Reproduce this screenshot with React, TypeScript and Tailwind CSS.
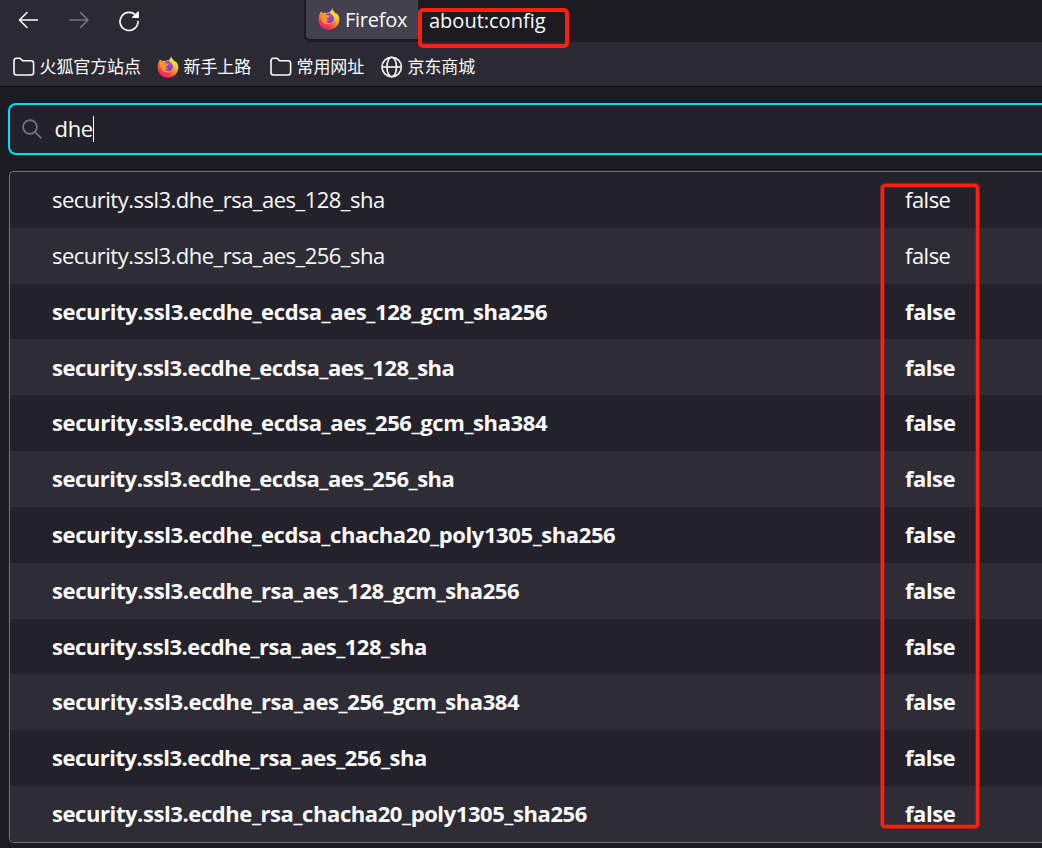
import React from "react";

const rows = [
  { name: "security.ssl3.dhe_rsa_aes_128_sha", style: "font-normal tracking-[-0.51px]" },
  { name: "security.ssl3.dhe_rsa_aes_256_sha", style: "font-normal tracking-[-0.51px]" },
  { name: "security.ssl3.ecdhe_ecdsa_aes_128_gcm_sha256", style: "font-bold tracking-[-0.39px]" },
  { name: "security.ssl3.ecdhe_ecdsa_aes_128_sha", style: "font-bold tracking-[-0.48px]" },
  { name: "security.ssl3.ecdhe_ecdsa_aes_256_gcm_sha384", style: "font-bold tracking-[-0.39px]" },
  { name: "security.ssl3.ecdhe_ecdsa_aes_256_sha", style: "font-bold tracking-[-0.48px]" },
  { name: "security.ssl3.ecdhe_ecdsa_chacha20_poly1305_sha256", style: "font-bold tracking-[-0.4px]" },
  { name: "security.ssl3.ecdhe_rsa_aes_128_gcm_sha256", style: "font-bold tracking-[-0.4px]" },
  { name: "security.ssl3.ecdhe_rsa_aes_128_sha", style: "font-bold tracking-[-0.49px]" },
  { name: "security.ssl3.ecdhe_rsa_aes_256_gcm_sha384", style: "font-bold tracking-[-0.4px]" },
  { name: "security.ssl3.ecdhe_rsa_aes_256_sha", style: "font-bold tracking-[-0.49px]" },
  { name: "security.ssl3.ecdhe_rsa_chacha20_poly1305_sha256", style: "font-bold tracking-[-0.42px]" },
];

function FirefoxLogo({ id }: { id: string }) {
  return (
    <svg width="22" height="22" viewBox="0 0 22 22" className="shrink-0">
      <defs>
        <linearGradient id={id + "-body"} x1="0.8" y1="0.05" x2="0.25" y2="0.95">
          <stop offset="0" stopColor="#fff04a" />
          <stop offset="0.32" stopColor="#ffc62e" />
          <stop offset="0.58" stopColor="#ff7a32" />
          <stop offset="0.82" stopColor="#ff3350" />
          <stop offset="1" stopColor="#f01c7c" />
        </linearGradient>
        <radialGradient id={id + "-globe"} cx="0.6" cy="0.2" r="0.8">
          <stop offset="0" stopColor="#a850e8" />
          <stop offset="1" stopColor="#5b3fd0" />
        </radialGradient>
      </defs>
      <path
        d="M14.2 0.3C14.600 2.600 16.200 3.500 17.400 5.200C17.800 5.700 18.300 5.900 18.600 5.300C20.600 7.200 21.600 9.600 21.300 12.300C20.900 17.900 16.500 21.700 11 21.700C5 21.700 .6 17.400 .6 11.700C.6 8.800 1.200 6.300 2.500 4.400L3 3.200L4.800 5.200C5.800 4.700 7 4.700 8.200 5.200C9.200 4.400 10.400 4.100 11.600 4.300C12.800 3.400 13.800 1.900 14.200.3Z"
        fill={"url(#" + id + "-body)"}
      />
      <path
        d="M7.500 7C8.400 5.300 10.200 4.500 12 4.800C13 5.900 15.200 7.300 15.800 9.600C16.400 12.700 13.800 15.200 10.800 15C8.400 14.800 6.800 13.300 6.900 11.200Z"
        fill={"url(#" + id + "-globe)"}
      />
      <path
        d="M2.500 5.300C4.700 4.500 6.600 5.300 7.500 7C8.900 7 11 7.500 11.300 8.400C11.200 9.600 9.200 9.900 8.700 10.800C8.900 12 10.200 12.400 11.700 11.800C11 13.200 9.400 13.500 8 12.900C9.100 14.700 11.300 15.200 13.200 14.600C10.500 17.500 5.600 16.400 4.100 13.300C2.900 10.700 3.100 7.900 2.500 5.300Z"
        fill="#ff922c"
      />
    </svg>
  );
}

function FolderIcon() {
  return (
    <svg width="22" height="20" viewBox="0 0 22 20" fill="none" stroke="#fbfbfe" strokeWidth="1.6" strokeLinejoin="round" className="shrink-0">
      <path d="M1 4C1 2.200 1.800 1.200 3.500 1.200H6.200C7 1.200 7.500 1.500 8 2.100L9.600 3.700H18C19.800 3.700 20.600 4.600 20.600 6.200V15.600C20.600 17.200 19.800 18 18 18H3.500C1.800 18 1 17.200 1 15.600Z" />
    </svg>
  );
}

function GlobeIcon() {
  return (
    <svg width="22" height="22" viewBox="0 0 22 22" fill="none" stroke="#fbfbfe" strokeWidth="1.6" className="shrink-0">
      <circle cx="10.700" cy="11" r="9.700" />
      <ellipse cx="10.700" cy="11" rx="4.800" ry="9.700" />
      <path d="M1 11H20.400" />
    </svg>
  );
}

function Bookmark({ label, icon, className }: { label: string; icon: React.ReactNode; className: string }) {
  return (
    <div className={"flex shrink-0 items-center " + className}>
      {icon}
      <span className="ml-[4.500px] whitespace-nowrap text-[17px] leading-6 tracking-[-0.1px]">{label}</span>
    </div>
  );
}

export default function App() {
  return (
    <div className="relative flex h-[848px] w-full flex-col overflow-hidden bg-[#1c1b22] font-['Open_Sans','Noto_Sans_CJK_SC',sans-serif] text-[#fbfbfe]">
      <header className="h-[87px] shrink-0 border-b border-[#0c0c0d] bg-[#2b2a33]">
        <div className="flex h-[42px]">
          <nav className="flex w-[304px] shrink-0 items-start pl-[18px] pt-[10px]">
            <svg width="22" height="20" viewBox="0 0 22 20" fill="none" stroke="#fbfbfe" strokeWidth="1.600" strokeLinecap="round" strokeLinejoin="round">
              <path d="M19.500 10H1.500M9 2.500L1.500 10L9 17.500" />
            </svg>
            <svg width="22" height="20" viewBox="0 0 22 20" fill="none" stroke="#77767d" strokeWidth="1.600" strokeLinecap="round" strokeLinejoin="round" className="ml-[28px]">
              <path d="M2 10H20M12.500 2.500L20 10L12.500 17.500" />
            </svg>
            <svg width="22" height="22" viewBox="0 0 22 22" fill="none" className="ml-[28px]">
              <path d="M18.300 6.200A9 9 0 1 0 20 11.500" stroke="#fbfbfe" strokeWidth="1.700" strokeLinecap="round" />
              <path d="M20.900 1.900V7.300C20.900 7.700 20.700 8 20.200 8H14.700C14 8 13.800 7.300 14.200 6.900L19.800 1.400C20.200 1 20.900 1.200 20.900 1.900Z" fill="#fbfbfe" />
            </svg>
          </nav>
          <div className="flex flex-1 rounded-bl-md bg-[#1c1b22] pb-[2px] pl-[2px]">
            <div className="flex h-[39px] w-[112px] items-start rounded-bl bg-[#42414d] pl-[12px]">
              <div className="pt-[8px]"><FirefoxLogo id="tab" /></div>
              <span className="ml-[5px] mt-[6px] text-[20px] leading-[28px] tracking-[-0.25px]">Firefox</span>
            </div>
            <span className="ml-[11px] mt-[7px] text-[20px] leading-[28px]">about:config</span>
          </div>
        </div>
        <div className="flex h-[44px] items-center pl-[13px] pt-[6px]">
          <Bookmark label="火狐官方站点" icon={<FolderIcon />} className="w-[144px]" />
          <Bookmark label="新手上路" icon={<FirefoxLogo id="bookmark" />} className="w-[113px]" />
          <Bookmark label="常用网址" icon={<FolderIcon />} className="w-[111px]" />
          <Bookmark label="京东商城" icon={<GlobeIcon />} className="w-[100px]" />
        </div>
      </header>
      <main className="flex flex-1 flex-col pt-4">
        <div className="ml-2 flex h-[52px] shrink-0 items-center rounded-l-lg border-2 border-r-0 border-[#00ddff] bg-[#23222b] pl-[12px]">
          <svg width="21" height="21" viewBox="0 0 21 21" fill="none" stroke="#77767e" strokeWidth="1.700" strokeLinecap="round">
            <circle cx="8" cy="8" r="6.900" />
            <path d="M13 13L19 19" />
          </svg>
          <span className="ml-[11.500px] pb-[2px] text-[22px] leading-[30px] tracking-[-0.3px]">dhe</span>
          <span className="h-[26px] w-px bg-white" />
        </div>
        <div className="ml-[9px] mt-4 h-[672px] shrink-0 overflow-hidden rounded-l-[5px] border border-r-0 border-[#77767e]">
          {rows.map((row) => (
            <div
              key={row.name}
              className={
                "flex h-[55.840px] items-center pb-[1.800px] pl-[42px] text-[22px] leading-[30px] odd:bg-[#23222b] even:bg-[#2e2d36] " +
                row.style
              }
            >
              <span className="w-[853px] whitespace-nowrap">{row.name}</span>
              <span>false</span>
            </div>
          ))}
        </div>
      </main>
      <div className="absolute left-[418px] top-[8px] h-[40px] w-[151px] rounded-[5px] border-4 border-[#ff1f10]" />
      <div className="absolute left-[881px] top-[184px] h-[644px] w-[98px] rounded-[4px] border-3 border-[#ff1f10] shadow-[0_0_0_1px_#ff1f1080,inset_0_0_0_1px_#ff1f1050]" />
    </div>
  );
}
